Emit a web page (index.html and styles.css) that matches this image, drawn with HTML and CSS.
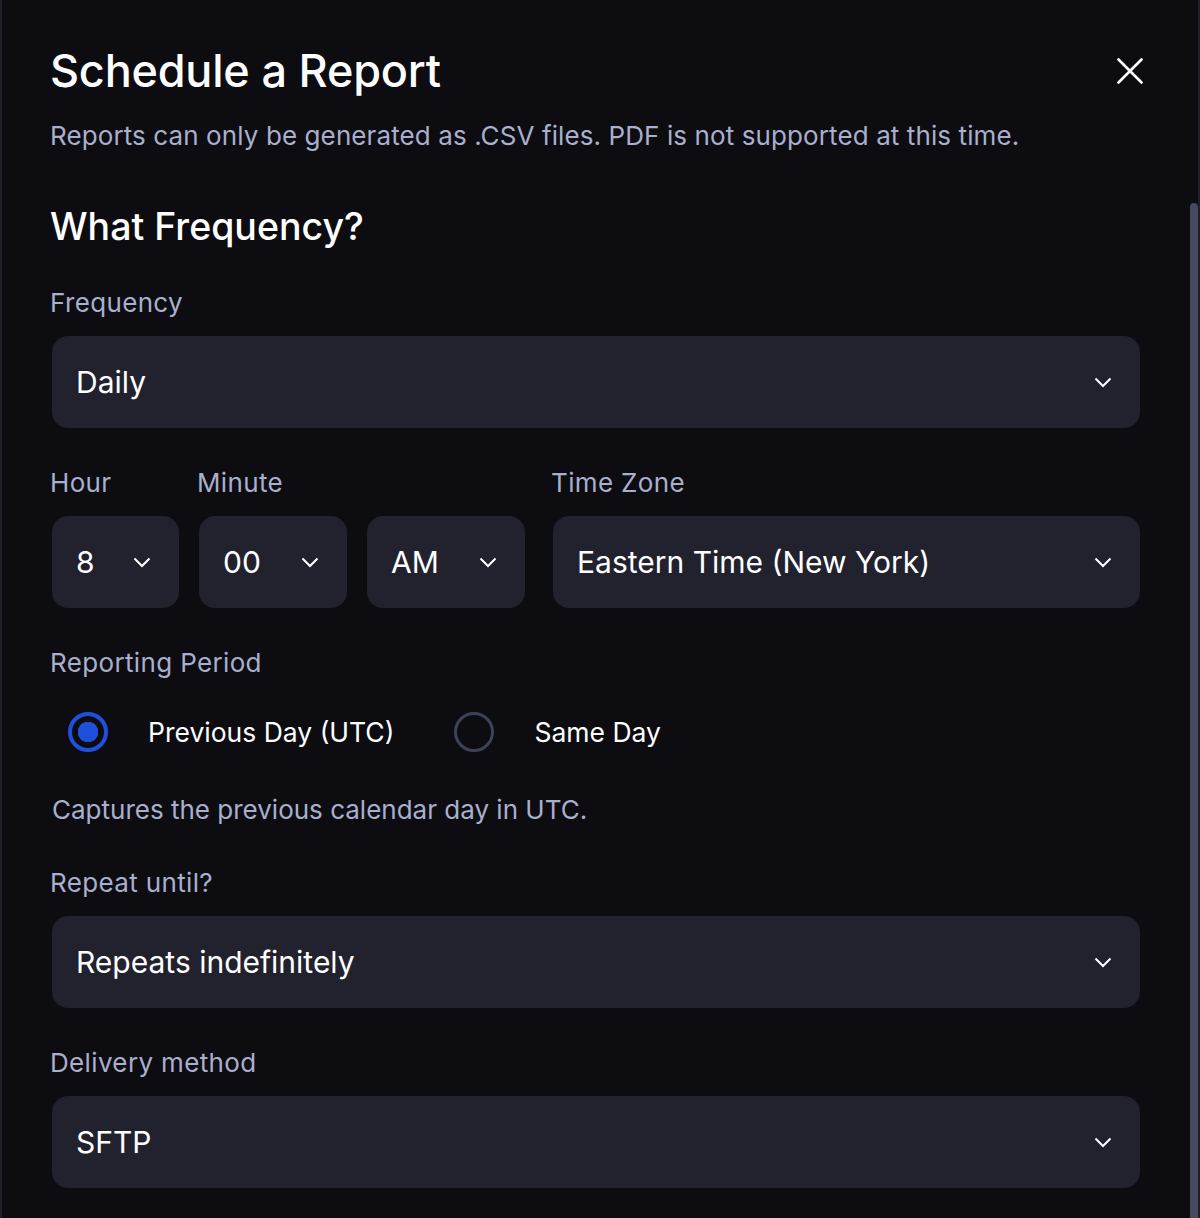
FILE: index.html
```html
<!DOCTYPE html>
<html lang="en">
<head>
  <meta charset="UTF-8" />
  <meta name="viewport" content="width=device-width, initial-scale=1.0" />
  <title>Schedule a Report</title>
  <link rel="stylesheet" href="styles.css">
</head>
<body>
  <div class="panel">
    <div class="panel-body">
      <div class="header">
        <h1>Schedule a Report</h1>
        <button class="close" type="button" aria-label="Close">
          <svg width="26" height="26" viewBox="0 0 26 26"><path d="M1.5 1.5L24.5 24.5M24.5 1.5L1.5 24.5" stroke="#fff" stroke-width="2.6" stroke-linecap="round"/></svg>
        </button>
      </div>
      <p class="subtitle">Reports can only be generated as .CSV files. PDF is not supported at this time.</p>

      <h2>What Frequency?</h2>

      <div class="field">
        <div class="label">Frequency</div>
        <div class="select">
          <span>Daily</span>
          <svg class="chev" width="18" height="11" viewBox="0 0 18 11"><path d="M1.5 1.5L9 9L16.5 1.5" fill="none" stroke="#fff" stroke-width="2"/></svg>
        </div>
      </div>

      <div class="time-row">
        <div class="field">
          <div class="label">Hour</div>
          <div class="select sm hour">
            <span>8</span>
            <svg class="chev" width="18" height="11" viewBox="0 0 18 11"><path d="M1.5 1.5L9 9L16.5 1.5" fill="none" stroke="#fff" stroke-width="2"/></svg>
          </div>
        </div>
        <div class="field">
          <div class="label">Minute</div>
          <div class="select sm minute">
            <span>00</span>
            <svg class="chev" width="18" height="11" viewBox="0 0 18 11"><path d="M1.5 1.5L9 9L16.5 1.5" fill="none" stroke="#fff" stroke-width="2"/></svg>
          </div>
        </div>
        <div class="field">
          <div class="label">&nbsp;</div>
          <div class="select sm ampm">
            <span>AM</span>
            <svg class="chev" width="18" height="11" viewBox="0 0 18 11"><path d="M1.5 1.5L9 9L16.5 1.5" fill="none" stroke="#fff" stroke-width="2"/></svg>
          </div>
        </div>
        <div class="field tz">
          <div class="label">Time Zone</div>
          <div class="select">
            <span>Eastern Time (New York)</span>
            <svg class="chev" width="18" height="11" viewBox="0 0 18 11"><path d="M1.5 1.5L9 9L16.5 1.5" fill="none" stroke="#fff" stroke-width="2"/></svg>
          </div>
        </div>
      </div>

      <div class="label period-label">Reporting Period</div>
      <div class="radios">
        <label class="radio checked"><span class="dot"></span>Previous Day (UTC)</label>
        <label class="radio"><span class="dot"></span>Same Day</label>
      </div>
      <p class="hint">Captures the previous calendar day in UTC.</p>

      <div class="field spaced">
        <div class="label">Repeat until?</div>
        <div class="select">
          <span>Repeats indefinitely</span>
          <svg class="chev" width="18" height="11" viewBox="0 0 18 11"><path d="M1.5 1.5L9 9L16.5 1.5" fill="none" stroke="#fff" stroke-width="2"/></svg>
        </div>
      </div>

      <div class="field spaced">
        <div class="label">Delivery method</div>
        <div class="select">
          <span>SFTP</span>
          <svg class="chev" width="18" height="11" viewBox="0 0 18 11"><path d="M1.5 1.5L9 9L16.5 1.5" fill="none" stroke="#fff" stroke-width="2"/></svg>
        </div>
      </div>
    </div>
    <div class="scrollbar"><div class="thumb"></div></div>
  </div>
</body>
</html>
```

FILE: styles.css
```css
html, body {
  margin: 0;
  height: 100%;
  background: #0c0c11;
  font-family: Inter, "Noto Sans", sans-serif;
  color: #fff;
  overflow: hidden;
}
.panel {
  display: flex;
  height: 1218px;
  border-left: 2px solid #1f1f29;
  border-right: 2px solid #1f1f29;
  box-sizing: border-box;
}
.panel-body {
  flex: 1;
  padding: 43px 50px 0 48px;
}
.header {
  display: flex;
  justify-content: space-between;
  align-items: center;
}
h1 {
  margin: 0;
  font-size: 45px;
  line-height: 56px;
  font-weight: 500;
  letter-spacing: -0.2px;
}
.close {
  background: none;
  border: none;
  padding: 0;
  margin-right: -3px;
  display: flex;
  cursor: pointer;
}
.subtitle {
  margin: 19px 0 0;
  font-size: 26px;
  line-height: 36px;
  letter-spacing: 0.1px;
  color: #a9afcc;
}
h2 {
  margin: 49px 0 0;
  font-size: 37.5px;
  line-height: 48px;
  font-weight: 500;
}
.label {
  font-size: 26px;
  line-height: 36px;
  letter-spacing: 0.35px;
  color: #a9afcc;
  margin-bottom: 15px;
}
.field {
  margin-top: 34px;
}
.field.spaced {
  margin-top: 37px;
}
.select {
  display: flex;
  align-items: center;
  justify-content: space-between;
  height: 92px;
  margin-left: 2px;
  padding: 0 28px 0 24px;
  background: #22222e;
  border-radius: 16px;
  font-size: 30px;
}
.chev {
  flex: none;
}
.time-row {
  display: flex;
  gap: 18px;
}
.time-row .field {
  margin-top: 37px;
}
.select.sm {
  padding-right: 28px;
}
.hour { width: 127px; box-sizing: border-box; }
.minute { width: 148px; box-sizing: border-box; }
.ampm { width: 158px; box-sizing: border-box; }
.field.tz {
  flex: 1;
  margin-left: 8px;
}
.period-label {
  margin-top: 37px;
  margin-bottom: 0;
}
.radios {
  display: flex;
  gap: 60px;
  margin-top: 31px;
  margin-left: 18px;
}
.radio {
  display: flex;
  align-items: center;
  gap: 40px;
  font-size: 26.5px;
  line-height: 40px;
}
.dot {
  width: 40px;
  height: 40px;
  box-sizing: border-box;
  border-radius: 50%;
  border: 3px solid #3d4257;
}
.radio.checked .dot {
  border: 4px solid #1f50db;
  background: radial-gradient(circle, #1f50db 0 10px, transparent 10.5px);
}
.hint {
  margin: 40px 0 0 2px;
  font-size: 26px;
  line-height: 36px;
  color: #a9afcc;
}
.scrollbar {
  width: 8px;
  position: relative;
}
.thumb {
  position: absolute;
  top: 203px;
  bottom: 0;
  left: 0;
  right: 0;
  background: #454a60;
  border-radius: 4px 4px 0 0;
}
```
